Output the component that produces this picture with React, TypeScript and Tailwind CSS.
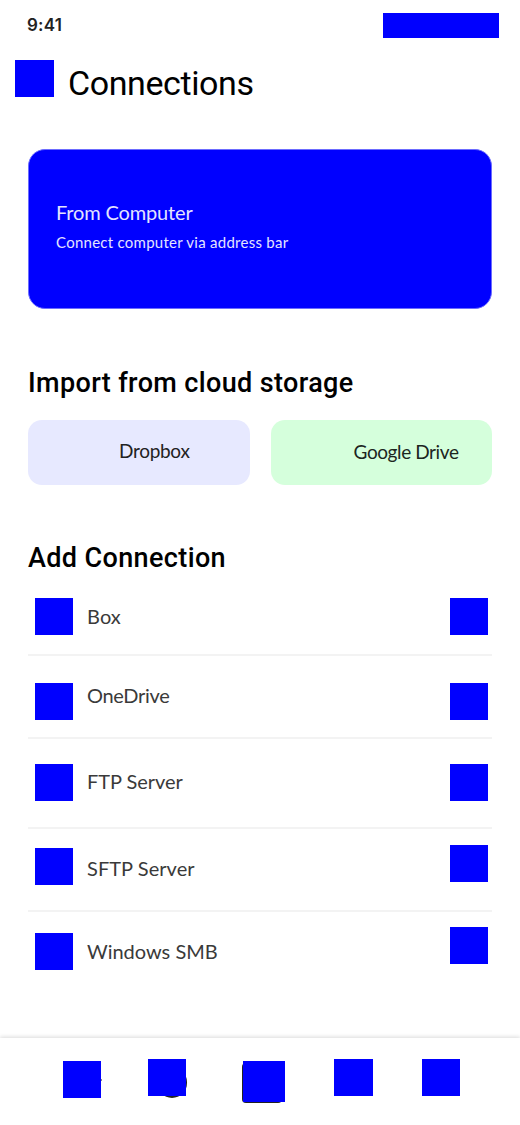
import React from "react";

const connections = [
  { name: "Box", row: "h-[72px]", left: "mt-[14px]", label: "mt-[20px] tracking-[0.1px]", right: "mt-[14px]" },
  { name: "OneDrive", row: "h-[83px]", left: "mt-[27px]", label: "mt-[27px] tracking-[-0.3px]", right: "mt-[27px]" },
  { name: "FTP Server", row: "h-[90px]", left: "mt-[25px]", label: "mt-[30px] tracking-[-0.05px]", right: "mt-[25px]" },
  { name: "SFTP Server", row: "h-[83px]", left: "mt-[19px]", label: "mt-[27px] tracking-[0.05px]", right: "mt-[16px]" },
  { name: "Windows SMB", row: "h-[82px]", left: "mt-[21px]", label: "mt-[27px]", right: "mt-[15px]" },
];

function Block({ className }: { className: string }) {
  return <div className={`shrink-0 bg-[#0000ff] ${className}`} />;
}

export default function App() {
  return (
    <div className="flex h-[1125px] w-[520px] flex-col overflow-hidden bg-white font-['Lato','Noto_Sans',sans-serif] text-black">
      <header className="h-[149px]">
        <div className="flex h-[60px] items-start justify-between pr-[21px] pl-[27px]">
          <span className="mt-[13px] font-['Inter',sans-serif] text-[17px] leading-6 font-semibold tracking-[0.2px] text-[#222]">9:41</span>
          <Block className="mt-[13px] h-[25px] w-[116px]" />
        </div>
        <div className="flex pl-[15px]">
          <Block className="h-[37px] w-[39px]" />
          <h1 className="mt-[3px] ml-[14px] font-['Roboto',sans-serif] text-[34px] leading-[40px] font-normal tracking-[-0.4px] whitespace-nowrap">Connections</h1>
        </div>
      </header>

      <section className="mx-[28px] h-[160px] shrink-0 rounded-[17px] border border-[#6c6cff] bg-[#0000ff] pt-[50px] pl-[27px] text-[#e4e4ff]">
        <h2 className="text-[20px] leading-6 tracking-[-0.15px] whitespace-nowrap">From Computer</h2>
        <p className="mt-[8px] text-[15px] leading-5 tracking-[0.26px] whitespace-nowrap">Connect computer via address bar</p>
      </section>

      <section className="mx-[28px] mt-[58px] shrink-0">
        <h2 className="font-['Roboto',sans-serif] text-[27px] leading-8 font-medium tracking-[0.37px] whitespace-nowrap">Import from cloud storage</h2>
        <div className="mt-[21px] flex gap-[21px]">
          <div className="h-[65px] w-[222px] rounded-[14px] bg-[#e7e9ff] pt-[19px] pl-[91px] text-[19px] leading-6 tracking-[-0.3px] whitespace-nowrap text-[#222]">Dropbox</div>
          <div className="h-[65px] w-[222px] rounded-[14px] bg-[#d5ffdc] pt-[20px] pl-[83px] text-[19px] leading-6 tracking-[-0.4px] whitespace-nowrap text-[#1c261e]">Google Drive</div>
        </div>
      </section>

      <section className="mx-[28px] mt-[57px] shrink-0">
        <h2 className="font-['Roboto',sans-serif] text-[27px] leading-8 font-medium tracking-[0.37px] whitespace-nowrap">Add Connection</h2>
        <ul className="mt-[10px] divide-y-2 divide-[#f3f3f3]">
          {connections.map((c) => (
            <li key={c.name} className={`flex items-start pr-[4px] pl-[7px] ${c.row}`}>
              <Block className={`h-[37px] w-[38px] ${c.left}`} />
              <span className={`ml-[14px] flex-1 text-[20px] leading-6 whitespace-nowrap text-[#3a3a3a] ${c.label}`}>{c.name}</span>
              <Block className={`h-[37px] w-[38px] ${c.right}`} />
            </li>
          ))}
        </ul>
      </section>

      <nav className="mt-auto flex h-[87px] shrink-0 items-start pt-[21px] pl-[63px] shadow-[0_-1px_4px_#00000026]">
        <div className="relative mt-[2px]">
          <Block className="h-[37px] w-[38px]" />
          <div className="absolute top-[18px] left-[38px] h-[2px] w-px bg-[#888]" />
        </div>
        <div className="relative isolate ml-[47px]">
          <div className="absolute top-[8px] left-[9px] -z-10 h-[31px] w-[30px] rounded-full bg-[#222]" />
          <Block className="h-[37px] w-[38px]" />
        </div>
        <div className="relative isolate mt-[2px] ml-[57px]">
          <div className="absolute top-[2px] -left-px -z-10 h-[40px] w-[40px] rounded-[4px] bg-[#222]" />
          <Block className="h-[41px] w-[42px]" />
        </div>
        <Block className="ml-[49px] h-[37px] w-[39px]" />
        <Block className="ml-[49px] h-[37px] w-[38px]" />
      </nav>
    </div>
  );
}
